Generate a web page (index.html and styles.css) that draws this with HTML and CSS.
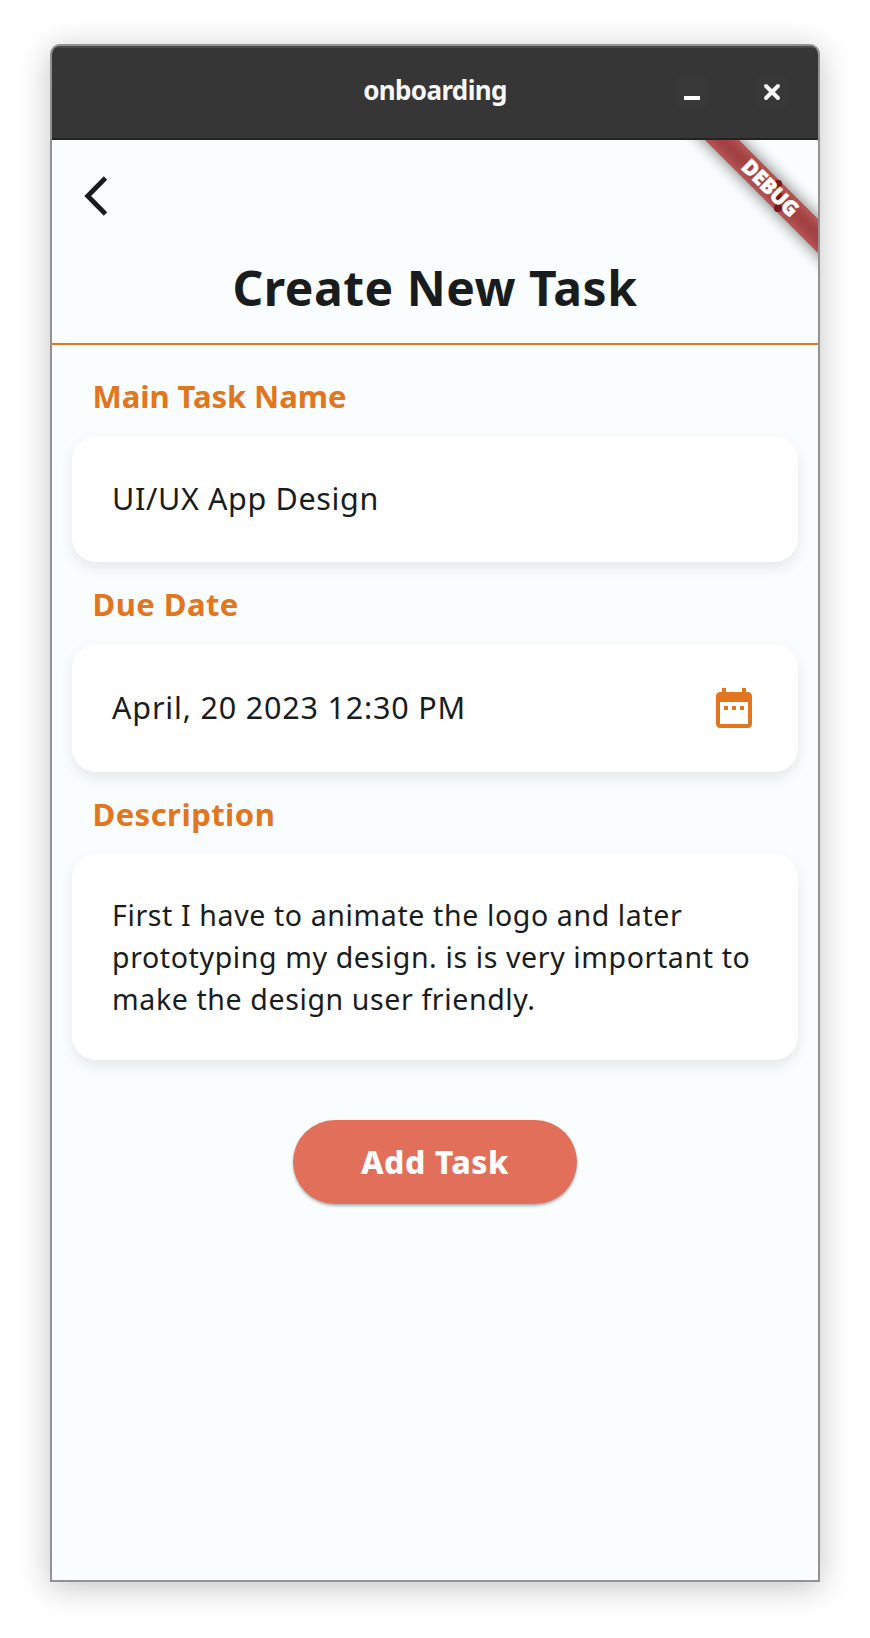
FILE: index.html
```
<!DOCTYPE html>
<html lang="en">
<head>
<meta charset="utf-8">
<title>onboarding</title>
<link rel="stylesheet" href="styles.css">
</head>
<body>
<div class="window">
  <header class="titlebar">
    <span class="titlebar-name">onboarding</span>
    <div class="controls">
      <svg class="control" viewBox="0 0 32 32"><path d="M8 22h16" stroke="#fff" stroke-width="4"/></svg>
      <svg class="control" viewBox="0 0 32 32"><path d="M10 10l12 12M22 10L10 22" stroke="#f4f4f4" stroke-width="4" stroke-linecap="round"/></svg>
    </div>
  </header>
  <main class="app">
    <div class="toolbar">
      <svg class="back" viewBox="0 0 24 40" fill="none"><path d="M21.500 2L3.700 20l17.800 18" stroke="#191c1d" stroke-width="4.800"/></svg>
      <svg class="more" viewBox="0 0 8 32" fill="#191c1d"><circle cx="4" cy="4" r="4"/><circle cx="4" cy="16" r="4"/><circle cx="4" cy="28" r="4"/></svg>
    </div>
    <h1 class="heading">Create New Task</h1>
    <section class="form">
      <h2 class="label label-main">Main Task Name</h2>
      <div class="card"><span class="value value-name">UI/UX App Design</span></div>
      <h2 class="label">Due Date</h2>
      <div class="card card-date">
        <span class="value">April, 20 2023 12:30 PM</span>
        <svg class="calendar" viewBox="0 0 24 24" fill="#e2761f"><path d="M9 11H7v2h2v-2zm4 0h-2v2h2v-2zm4 0h-2v2h2v-2zm2-7h-1V2h-2v2H8V2H6v2H5c-1.100 0-2 .9-2 2v14c0 1.100.9 2 2 2h14c1.100 0 2-.9 2-2V6c0-1.100-.9-2-2-2zm0 16H5V9h14v11z"/></svg>
      </div>
      <h2 class="label">Description</h2>
      <div class="card card-text">
        <p class="text">First I have to animate the logo and later<br>prototyping my design. is is very important to<br>make the design user friendly.</p>
      </div>
      <button class="add">Add Task</button>
    </section>
    <div class="ribbon-shadow"></div>
    <div class="ribbon">DEBUG</div>
  </main>
</div>
</body>
</html>
```
FILE: styles.css
```
* { box-sizing: border-box; margin: 0; padding: 0; }
body {
  background: #fff;
  padding: 44px 50px 56px;
  font-family: "Noto Sans", sans-serif;
  color: #191c1d;
}
.window {
  width: 770px;
  height: 1538px;
  border: 2px solid #929292;
  border-radius: 10px 10px 0 0;
  box-shadow: 0 5px 32px rgba(0, 0, 0, .24);
  overflow: hidden;
  background: #f9fdfe;
}
.titlebar {
  display: grid;
  grid-template-columns: 1fr auto 1fr;
  align-items: center;
  height: 94px;
  background: #363636;
  border-top: 2px solid #4a4a4a;
  border-bottom: 2px solid #232323;
}
.titlebar-name {
  grid-column: 2;
  padding-bottom: 6px;
  font-size: 26px;
  font-weight: 700;
  letter-spacing: -.64px;
  line-height: 36px;
  color: #f7f7f7;
  white-space: nowrap;
}
.controls { display: flex; justify-content: flex-end; gap: 48px; padding: 0 30px 2px 0; }
.control { width: 32px; height: 32px; background: #383838; fill: none; }
.app { position: relative; height: 1440px; overflow: hidden; }
.toolbar {
  display: flex;
  justify-content: space-between;
  align-items: center;
  height: 112px;
  padding: 0 36px 0 32px;
}
.back { width: 24px; height: 40px; }
.more { width: 8px; height: 32px; }
.heading {
  height: 93px;
  padding-top: 1px;
  border-bottom: 2px solid #e2761f;
  font-size: 48px;
  letter-spacing: .5px;
  line-height: 70px;
  text-align: center;
  white-space: nowrap;
}
.form { display: flex; flex-direction: column; padding: 31px 20px 0; }
.label {
  height: 40px;
  margin-bottom: 20px;
  padding-left: 20.500px;
  font-size: 31px;
  letter-spacing: .46px;
  line-height: 40px;
  color: #e2761f;
  white-space: nowrap;
}
.label-main { letter-spacing: -.05px; }
.card {
  display: flex;
  align-items: center;
  justify-content: space-between;
  height: 126px;
  margin-bottom: 22px;
  padding: 0 40px;
  background: #fff;
  border-radius: 24px;
  box-shadow: 0 6px 14px rgba(0, 0, 0, .085);
}
.card-date { height: 128px; }
.card-text { height: 206px; margin-bottom: 60px; }
.value {
  padding-bottom: 2px;
  font-size: 30.500px;
  letter-spacing: .82px;
  line-height: 42px;
  white-space: nowrap;
}
.value-name { letter-spacing: .65px; }
.text { font-size: 28.500px; letter-spacing: .62px; line-height: 42px; white-space: nowrap; }
.calendar { width: 48px; height: 48px; }
.add {
  align-self: center;
  width: 284px;
  height: 84px;
  border: 0;
  border-radius: 42px;
  background: #e26f5a;
  box-shadow: 0 2px 3px rgba(0, 0, 0, .3);
  color: #fff;
  font: 800 32px/42px "Noto Sans", sans-serif;
  letter-spacing: .5px;
  white-space: nowrap;
}
.ribbon, .ribbon-shadow {
  position: absolute;
  left: 568px;
  top: 36px;
  width: 300px;
  height: 24px;
  transform: rotate(45deg);
}
.ribbon-shadow { background: rgba(0, 0, 0, .55); filter: blur(8px); }
.ribbon {
  background: rgba(183, 28, 28, .63);
  color: #fff;
  font-size: 21px;
  font-weight: 900;
  letter-spacing: -.4px;
  line-height: 23px;
  text-align: center;
  -webkit-text-stroke: .5px #fff;
}
```
